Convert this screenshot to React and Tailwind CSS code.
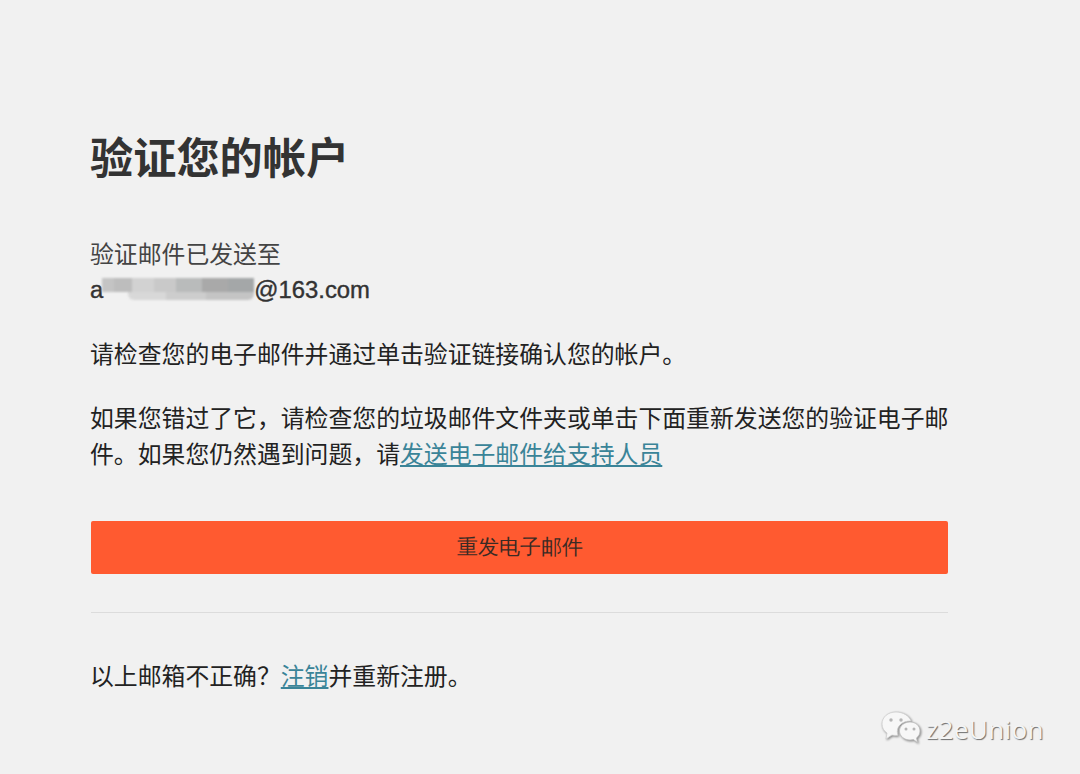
import React from 'react'

const cjk = 'font-["Liberation_Sans","Noto_Sans_CJK_SC",sans-serif]'

const blurTop = [
  ['bg-[#c4c4c4]', 'w-[12px]'],
  ['bg-[#bdbdbd]', 'w-[18px]'],
  ['bg-[#d2d2d2]', 'w-[22px]'],
  ['bg-[#c9c9c9]', 'w-[22px]'],
  ['bg-[#b9bbbb]', 'w-[26px]'],
  ['bg-[#a9a9a9]', 'w-[26px]'],
  ['bg-[#a4a7a8]', 'w-[26px]'],
]

const blurBottom = [
  ['bg-[#d8d8d8]', 'w-[38px]'],
  ['bg-[#cdcdcd]', 'w-[40px]'],
  ['bg-[#c4c4c4]', 'w-[48px]'],
]

const WechatMark = () => (
  <svg width="40" height="36" viewBox="0 0 40 36" className="drop-shadow-[1px_1px_1px_rgba(0,0,0,0.45)]">
    <path d="M15 1C7 1 1 6 1 13c0 4 2 7 5 9l-1 6 6-4c1 .3 2 .4 4 .4 1 0 1.500 0 2-.1-.5-1.300-.7-2.600-.7-3.800 0-6 5.700-10.500 12.700-10.500h1C28.500 5 22 1 15 1z" fill="#f7f7f7" stroke="#cfcfcf" strokeWidth="0.8" />
    <circle cx="10" cy="9" r="1.700" fill="#b5b5b5" />
    <circle cx="20" cy="9" r="1.700" fill="#b5b5b5" />
    <path d="M29 11c-5.800 0-10.500 3.900-10.500 9s4.700 9 10.500 9c1.300 0 2.400-.2 3.400-.5l4.100 3-1-4.600c2.300-1.600 3.500-4.100 3.500-6.900 0-5.100-4.200-9-10-9z" fill="#f7f7f7" stroke="#bdbdbd" strokeWidth="0.8" />
    <circle cx="25" cy="18" r="1.500" fill="#b5b5b5" />
    <circle cx="33" cy="18" r="1.500" fill="#b5b5b5" />
  </svg>
)

export default function App() {
  return (
    <div className={`relative w-[1080px] h-[774px] overflow-hidden bg-[#f1f1f1] ${cjk}`}>
      <div className="w-[860px] ml-[91px] pt-[131px]">
        <h1 className="-ml-px text-[43.2px] leading-[56px] font-bold text-[#333333]">验证您的帐户</h1>

        <div className="mt-[50px] -ml-px text-[23.85px] leading-[36px]">
          <p className="text-[#444444]">验证邮件已发送至</p>
          <p className="relative -mt-px font-medium text-[#333333] [-webkit-text-stroke:0.4px_#333333]">
            a<span className="inline-block w-[151px]" />@163.com
            <span className="absolute left-[12px] top-[6px] flex flex-col items-end blur-[1px]" aria-hidden="true">
              <span className="flex h-[14px]">
                {blurTop.map(([color, width], i) => (
                  <span key={i} className={`block h-full ${color} ${width}`} />
                ))}
              </span>
              <span className="flex h-[8px] rounded-b-[6px] overflow-hidden">
                {blurBottom.map(([color, width], i) => (
                  <span key={i} className={`block h-full ${color} ${width}`} />
                ))}
              </span>
            </span>
          </p>
        </div>

        <p className="mt-[29px] -ml-px text-[23.85px] leading-[36px] text-[#222222]">
          请检查您的电子邮件并通过单击验证链接确认您的帐户。
        </p>

        <p className="mt-[28px] -ml-px text-[23.85px] leading-[36px] text-[#222222]">
          如果您错过了它，请检查您的垃圾邮件文件夹或单击下面重新发送您的验证电子邮件。如果您仍然遇到问题，请
          <a className="text-[#3a8498] underline" href="#support">发送电子邮件给支持人员</a>
        </p>

        <button
          type="button"
          className="block mt-[48px] w-[857px] h-[53px] rounded-[2px] bg-[#ff5a30] text-center text-[21px] text-[#3a2a24] font-['Liberation_Serif',serif]"
        >
          重发电子邮件
        </button>

        <hr className="mt-[38px] w-[857px] border-t border-[#dcdcdc]" />

        <p className="mt-[46px] -ml-px text-[23.85px] leading-[36px] text-[#222222]">
          以上邮箱不正确？<a className="text-[#3a8498] underline" href="#logout">注销</a>并重新注册。
        </p>
      </div>

      <div className="absolute left-[881px] top-[711px] flex items-center gap-[5px]">
        <WechatMark />
        <span className="text-[26px] leading-[36px] tracking-[0.4px] text-[#f4f4f4] font-['Open_Sans',sans-serif] [text-shadow:1px_1px_1px_rgba(0,0,0,0.55)]">
          z2eUnion
        </span>
      </div>
    </div>
  )
}
